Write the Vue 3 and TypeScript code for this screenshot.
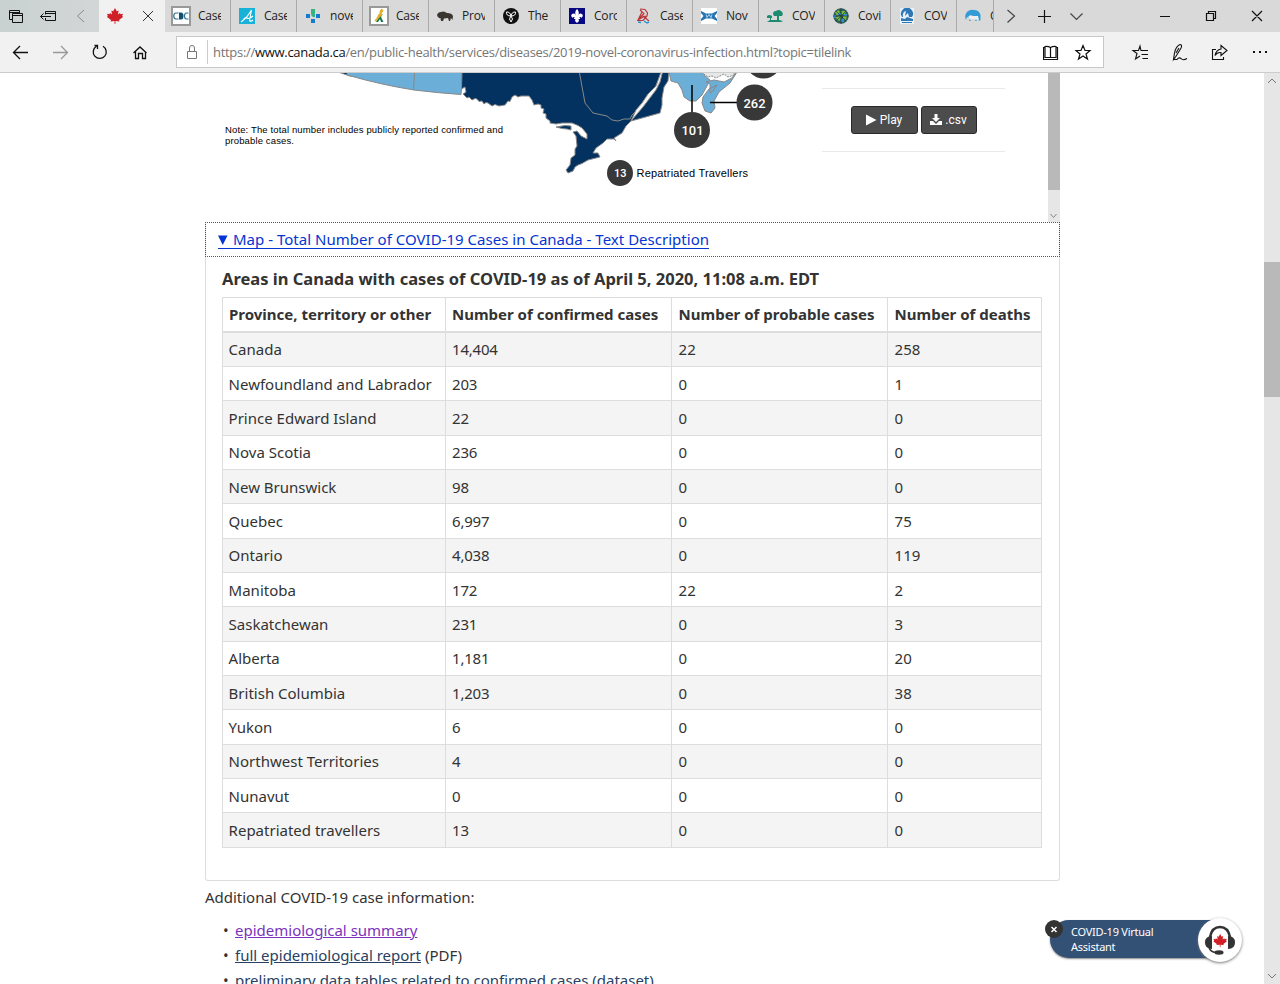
<script setup lang="ts">
interface Tab { icon: string; label: string }

const tabs: Tab[] = [
  { icon: 'cdc', label: 'Case' },
  { icon: 'alberta', label: 'Case' },
  { icon: 'cross', label: 'nove' },
  { icon: 'sask', label: 'Case' },
  { icon: 'bison', label: 'Prov' },
  { icon: 'ontario', label: 'The' },
  { icon: 'quebec', label: 'Coro' },
  { icon: 'nb', label: 'Case' },
  { icon: 'ns', label: 'Nov' },
  { icon: 'pei', label: 'COV' },
  { icon: 'globe', label: 'Covi' },
  { icon: 'yukon', label: 'COV' },
  { icon: 'bear', label: 'C' },
]

const headers: string[] = [
  'Province, territory or other',
  'Number of confirmed cases',
  'Number of probable cases',
  'Number of deaths',
]

const rows: string[][] = [
  ['Canada', '14,404', '22', '258'],
  ['Newfoundland and Labrador', '203', '0', '1'],
  ['Prince Edward Island', '22', '0', '0'],
  ['Nova Scotia', '236', '0', '0'],
  ['New Brunswick', '98', '0', '0'],
  ['Quebec', '6,997', '0', '75'],
  ['Ontario', '4,038', '0', '119'],
  ['Manitoba', '172', '22', '2'],
  ['Saskatchewan', '231', '0', '3'],
  ['Alberta', '1,181', '0', '20'],
  ['British Columbia', '1,203', '0', '38'],
  ['Yukon', '6', '0', '0'],
  ['Northwest Territories', '4', '0', '0'],
  ['Nunavut', '0', '0', '0'],
  ['Repatriated travellers', '13', '0', '0'],
]

const leaf = 'M8 0 L9.8 3.2 L11.6 2.4 L11 6.6 L13 5 L13.6 6.2 L16 5.8 L15.2 8 L16 9 L12 12 L12.4 13.4 L8.5 13 L8.4 16 H7.6 L7.5 13 L3.6 13.4 L4 12 L0 9 L.8 8 L0 5.8 L2.4 6.2 L3 5 L5 6.6 L4.4 2.4 L6.2 3.2 Z'
</script>

<template>
  <div class="window">
    <header class="tabbar">
      <div class="tab-tools">
        <svg width="98" height="32" viewBox="0 0 98 32" fill="none" stroke="#111">
          <path d="M9.500 19.500V10.500H19.500M9.500 12.500H19.500M12.500 19.500H9.500M12.500 22V13.500H22.500V22.500H12.500ZM12.500 15.500H22.500M19.500 10.500V13" />
          <path d="M45.500 14.500V11.500H55.500V20.500H45.500V18M45.500 13.500H55.500M40.500 16.500H51M43.500 13.500L40.500 16.500L43.500 19.500" />
          <path d="M84 10L77.500 16L84 22" stroke="#888" />
        </svg>
      </div>
      <div class="tab-active">
        <svg width="16" height="16" viewBox="0 0 16 16"><path :d="leaf" fill="#cf2027" /></svg>
        <svg width="12" height="12" viewBox="0 0 12 12" stroke="#333" fill="none"><path d="M1 1L11 11M11 1L1 11" /></svg>
      </div>
      <div v-for="t in tabs" :key="t.icon" class="tab" :class="'tab-' + t.icon">
        <svg v-if="t.icon === 'cdc'" class="fav wide" viewBox="0 0 20 20"><rect x="1" y="1" width="18" height="18" fill="#fff" stroke="#999" stroke-width="2" /><path d="M7.500 7H5Q2.800 7 2.800 10T5 13H7.500M17.500 7H15.500Q13.500 7 13.500 10T15.500 13H17.500" fill="none" stroke="#2b7390" stroke-width="1.200" /><path d="M8 6.500H10Q12.500 6.500 12.500 10T10 13.500H8Z" fill="#14506e" /></svg>
        <svg v-else-if="t.icon === 'alberta'" class="fav" viewBox="0 0 16 16"><rect width="16" height="16" fill="#18b2d8" /><path d="M2 14Q8 10 12.500 2L10.500 12.500Q12 14 14 12M4 12.500Q6 8.500 8 10T14 8" fill="none" stroke="#fff" stroke-width="1.100" /></svg>
        <svg v-else-if="t.icon === 'cross'" class="fav" viewBox="0 0 16 16"><path d="M6 1H10V9H8Q6 8 6 5Z" fill="#36b37e" /><path d="M1 6H5V10H1ZM11 6H15V10H11ZM6 11H10V15H6Z" fill="#147bd1" /></svg>
        <svg v-else-if="t.icon === 'sask'" class="fav wide" viewBox="0 0 20 20"><rect x="1" y="1" width="18" height="18" fill="#fff" stroke="#999" stroke-width="2" /><path d="M7 16L10 11L14 8L12 11L14.500 16H12L11 13L9 16Z" fill="#16734a" /><path d="M6 15L12 9M9 10.500L14 4M8 12L13 8M11 7L13 3" stroke="#e2ae24" stroke-width="1.700" /></svg>
        <svg v-else-if="t.icon === 'bison'" class="fav" viewBox="0 0 16 16"><path d="M0 7Q1 4 4 4Q7 2.500 10 5Q15 5 16 8L15.500 12L14 10L13 13H12L11 10L7 10.500L6 13H4L3.500 10Q1 11 0 7Z" fill="#39352f" /></svg>
        <svg v-else-if="t.icon === 'ontario'" class="fav" viewBox="0 0 16 16"><circle cx="8" cy="8" r="8" fill="#111" /><g fill="none" stroke="#fff"><path d="M8 8Q3 8 3.500 4Q7 3.500 8 8Q9 3.500 12.500 4Q13 8 8 8Q11 11 8 14Q5 11 8 8Z" /></g></svg>
        <svg v-else-if="t.icon === 'quebec'" class="fav" viewBox="0 0 16 16"><rect width="16" height="16" fill="#080880" /><path d="M8 1Q11 4 9 8Q10 4.500 13 6Q15 8 12 10Q12 8 10 10H11V11H9.500L10 13L8 15L6 13L6.500 11H5V10H6Q4 8 4 10Q1 8 3 6Q6 4.500 7 8Q5 4 8 1Z" fill="#fff" /></svg>
        <svg v-else-if="t.icon === 'nb'" class="fav" viewBox="0 0 16 16"><path d="M5 1L10 1.500L12.500 5L12 8L8.500 8.500L14 13M5 2L9 5.500L3 12L9 8.500M3 12L7 4M2 12.500H8L12 8" fill="none" stroke="#b8383b" stroke-width="1.200" /><path d="M3 14L6 14.500M9 13L12 15L14 14" fill="none" stroke="#2b93d1" stroke-width="1.500" /></svg>
        <svg v-else-if="t.icon === 'ns'" class="fav" viewBox="0 0 16 16"><rect width="16" height="16" fill="#fff" /><path d="M0 3L5 5.500H11L16 3V5L13.500 8L16 11V13L11 10.500H5L0 13V11L2.500 8L0 5Z" fill="#2374b5" /><path d="M5 6.500L6 9.500L8 6.500L10 9.500L11 6.500" fill="none" stroke="#dcecf8" stroke-width=".8" /></svg>
        <svg v-else-if="t.icon === 'pei'" class="fav" viewBox="0 0 16 16"><path d="M6 6Q6 3 9 3Q12 1 14 3Q17 5 15 8H12V12L16 13L14 14H0L3 12V10H0V8Q2 6 5 8V10H4V12H10V8H7Z" fill="#1d8b70" /></svg>
        <svg v-else-if="t.icon === 'globe'" class="fav" viewBox="0 0 16 16"><circle cx="8" cy="8" r="7.700" fill="#2f5d5b" /><path d="M2 4L6 2L7 5L4 8ZM8 3L13 3L12 6L9 7ZM3 9L8 8L7 13L4 12ZM10 8H14L13 12L10 11Z" fill="#74ba3a" /><path d="M5 5H8V7H5ZM11 6H14V8H11ZM8 11H11V14H8ZM1 7H3V10H1Z" fill="#2d93dd" /><path d="M3 3L13 13M13 3L3 13M8 0V16M0 8H16" stroke="#263b31" stroke-width=".7" /></svg>
        <svg v-else-if="t.icon === 'yukon'" class="fav" viewBox="0 0 16 16"><rect x="1" width="14" height="16" fill="#e9f1f8" /><path d="M3 9A6 6 0 1 1 13 9L10 9L9 5L6 8L7 3Q3 4 4 9ZM2 10L6 11L8 9L14 11V13H2ZM3 14H13V15H3Z" fill="#2f78b6" /></svg>
        <svg v-else class="fav" viewBox="0 0 16 16"><path d="M1 12Q-1 7 2 4Q5 1 9 2Q14 2 15.500 7V12L14 13L13 10H12V13H10V11H6V13H4L4 10L2 9Z" fill="#339bd5" /><path d="M3 9Q5 6 8 8L13 8L14 12L12 11L11 13L10 11H6L5 13L4 10Z" fill="#eee" /></svg>
        <span class="tab-label">{{ t.label }}</span>
      </div>
      <svg class="window-tools" width="286" height="32" viewBox="994 0 286 32" fill="none" stroke="#111">
        <path d="M1007.500 10L1014.500 16L1007.500 22.500M1070.500 13.500L1076.500 19.500L1082.500 13.500" stroke="#444" stroke-width="1.200" />
        <path d="M1038 16.500H1051M1044.500 10V23M1160 16.500H1170M1206.500 13.500H1213.500V20.500H1206.500ZM1208.500 13V11.500H1215.500V18.500H1214M1252 11L1262 21M1262 11L1252 21" stroke-width="1.200" />
      </svg>
    </header>

    <nav class="addressbar">
      <svg width="176" height="40" viewBox="0 32 176 40" fill="none" stroke="#111" stroke-width="1.300">
        <path d="M28 52.500H14M20 46L13.500 52.500L20 59" />
        <path d="M53 52.500H67M61 46L67.500 52.500L61 59" stroke="#999" />
        <path d="M96.500 46.300A6.500 6.500 0 1 0 103 46.300M94.500 45.500H97.500V49" />
        <path d="M133.500 53L140 47L146.500 53M135.500 51.500V58.500H138.500V53.500H142.500V58.500H145.500V51.500" />
      </svg>
      <div class="url-field">
        <svg width="31" height="30" viewBox="0 0 31 30" fill="none" stroke="#777"><path d="M10.500 14.500H19.500V21.500H10.500ZM12.500 14V11Q12.500 8.500 15 8.500T17.500 11V14" /><path d="M30.500 3V27" stroke="#ccc" /></svg>
        <span class="url">https://<b>www.canada.ca</b>/en/public-health/services/diseases/2019-novel-coronavirus-infection.html?topic=tilelink</span>
        <svg width="60" height="30" viewBox="1043 37 60 30" fill="none" stroke="#111">
          <path d="M1050.500 47.500Q1048 46 1045 46.500V57.500H1050.500ZM1050.500 47.500Q1053 46 1056 46.500V57.500H1050.500M1045 47.500H1043.500V59.500H1057.500V47.500H1056" stroke-width="1.200" />
          <path d="M1083 45.500L1085 50.500H1090L1086 54L1087.500 59L1083 56L1078.500 59L1080 54L1076 50.500H1081Z" stroke-width="1.200" />
        </svg>
      </div>
      <svg width="176" height="40" viewBox="1104 32 176 40" fill="none" stroke="#111" stroke-width="1.100">
        <path d="M1143 50.500H1141L1140 46L1138.500 50.500H1133L1137 53.500L1135.500 59L1140 56M1142 50.500H1148M1141.500 54.500H1148M1142.500 58.500H1148" />
        <path d="M1173.500 59.500L1174.500 53Q1176 46 1180 44.500Q1183 45 1180.500 49L1175.500 57ZM1176 53L1179 48M1173 59.500H1177Q1179 57 1181 58.500Q1183 61 1187 58.500" />
        <path d="M1216 49.500H1212.500V59.500H1223.500V57M1215 55.500Q1216 50 1221 49V45.500L1227 50.500L1221 55.500V52.500Q1217 52 1215 55.500Z" />
        <path d="M1253 52H1255M1259 52H1261M1265 52H1267" stroke-width="2" />
      </svg>
    </nav>

    <div class="viewport">
      <main class="content">
        <section class="map-frame">
          <svg class="map" width="843" height="149" viewBox="205 73 843 149">
            <g stroke="#888" stroke-width="1">
              <path d="M338 72L350 76H360V72Z" fill="#033260" />
              <path d="M347 72V75Q382 85 414 90Q439 93 461 94.500L463 72Z" fill="#6bafd8" />
              <path d="M414.500 73L413.500 90" fill="none" />
              <path d="M462 72L461.500 89L465 87L466 92L463 94L467 98L469 97L472 100L475 98.500L477 99L479 101.500L482 101L484 104L486 102.500L488 103L492 106L495 104.500L499 106L505 105L508 101L510 101.500L512 97L515 95L518 97L521 96L529 96L532 100L534 105L538 104L541 105L541 108L544 109L543 113L546 114L546 118L550 121L550 123L556 124L562 123L572 123L578 125.500L582 128L587 134L587 139L581 136L577 131L573 132L576 136L577 146L575 149L575 155L571 158L570 165L566 170L568 173L573 171L575 167L578 165L582 163.500L588 160L600 157L598 153L593 153L596 148L603 143L607 139L614 139L616 141L614 138L622 133L626 126L631 121L642 118L660 113L662 105L662 98L664 87L668 81L669 72Z" fill="#033260" />
              <path d="M556 127L565 125.500L571 126L571 130L567 129L562 128.500Z" fill="#033260" />
              <path d="M579.500 73L585 103L593 113L607 116L612 120L618 121L624 119L630 119L632 115L636 111L650 93L655 88L662 72" fill="none" />
              <path d="M661 72L656 86L648 94L642 103L636 110L631 121L643 107L656 90L660 82L662.500 72Z" fill="#f7f7f7" />
              <path d="M669 72L671 81L678 83L682 90L684 97L690 101L696 101L702 95L708 84L710 80L705 76L702 72Z" fill="#6bafd8" />
              <path d="M737 72L730 83L719 92L714 101L715 108L711 113L705 111L702 103L703 97L709 89L717 85L713 91L710 93L710 84L706 82L714 80L724 82L732 78L736 72Z" fill="#6bafd8" />
              <path d="M701 72L708 77L712 76L716 78L724 74L728 77L734 75V72" fill="#e6e8e8" stroke-dasharray="2 1" />
            </g>
            <path d="M692 85V112M710 102.500H737" stroke="#000" stroke-width="1.500" />
            <g fill="#383838"><circle cx="763.500" cy="60.500" r="18" /><circle cx="692" cy="130" r="18" /><circle cx="754.500" cy="102.500" r="18" /><circle cx="620" cy="173" r="13" /></g>
            <g class="map-count">
              <text x="681.500" y="135" font-size="13.500" textLength="22" lengthAdjust="spacingAndGlyphs">101</text>
              <text x="743.500" y="107.500" font-size="13.500" textLength="22" lengthAdjust="spacingAndGlyphs">262</text>
              <text x="614" y="177" font-size="11" textLength="12.500">13</text>
            </g>
            <g class="map-text">
              <text x="636.500" y="177" font-size="11" textLength="111.500">Repatriated Travellers</text>
              <text x="225" y="133" font-size="9.500" textLength="278">Note: The total number includes publicly reported confirmed and</text>
              <text x="225" y="144" font-size="9.500" textLength="69">probable cases.</text>
            </g>
          </svg>
          <div class="map-actions">
            <button class="map-btn play"><svg width="11" height="12" viewBox="0 0 11 12"><path d="M0 0.500L10.500 6L0 11.500Z" fill="#fff" /></svg>Play</button>
            <button class="map-btn csv"><svg width="12" height="12" viewBox="0 0 12 12"><path d="M4.500 0H7.500V4H10L6 8L2 4H4.500ZM0 7H3L6 10L9 7H12V11H0Z" fill="#fff" /></svg>.csv</button>
          </div>
          <div class="frame-scroll"><div class="frame-thumb" /><svg width="12" height="10" viewBox="0 0 12 10" fill="none" stroke="#888"><path d="M2.500 2L5.500 5.500L8.500 2" /></svg></div>
        </section>

        <section class="details">
          <div class="summary"><a class="summary-link"><svg class="marker" width="10" height="10" viewBox="0 0 10 10"><path d="M0 0.500H9.500L4.750 10Z" fill="#0535d2" /></svg>Map - Total Number of COVID-19 Cases in Canada - Text Description</a></div>
          <h2 class="caption">Areas in Canada with cases of COVID-19 as of April 5, 2020, 11:08 a.m. EDT</h2>
          <table class="cases">
            <colgroup><col class="c1" /><col class="c2" /><col class="c3" /><col class="c4" /></colgroup>
            <thead><tr><th v-for="h in headers" :key="h">{{ h }}</th></tr></thead>
            <tbody><tr v-for="r in rows" :key="r[0]"><td v-for="(c, i) in r" :key="i">{{ c }}</td></tr></tbody>
          </table>
        </section>

        <p class="more">Additional COVID-19 case information:</p>
        <ul class="links">
          <li><a class="visited">epidemiological summary</a></li>
          <li><a>full epidemiological report</a> (PDF)</li>
          <li><a>preliminary data tables related to confirmed cases (dataset)</a></li>
        </ul>
      </main>
      <div class="page-scroll">
        <svg width="16" height="16" viewBox="0 0 16 16" fill="none" stroke="#777"><path d="M4 10L8 6L12 10" /></svg>
        <div class="page-thumb" />
        <svg class="down" width="16" height="16" viewBox="0 0 16 16" fill="none" stroke="#777"><path d="M4 6L8 10L12 6" /></svg>
      </div>
    </div>

    <aside class="assistant">
      <div class="assistant-pill">COVID-19 Virtual<br />Assistant</div>
      <svg class="assistant-close" width="18" height="18" viewBox="0 0 18 18"><circle cx="9" cy="9" r="9" fill="#333" /><path d="M6.500 7L11.500 12M11.500 7L6.500 12" stroke="#fff" stroke-width="1.500" /></svg>
      <div class="assistant-face">
        <svg width="32" height="30" viewBox="0 0 32 30">
          <path d="M6 12Q8 2 16 2T26 12" fill="none" stroke="#333" stroke-width="2.500" />
          <path d="M8 11V24Q1 24 1 17.500T8 11ZM24 11V24Q31 24 31 17.500T24 11Z" fill="#333" />
          <path d="M5 22Q6 27 12 27.500" fill="none" stroke="#333" stroke-width="1.500" />
          <ellipse cx="15" cy="27.500" rx="4.500" ry="2.200" fill="#333" />
          <g transform="translate(9.500 9) scale(.83)"><path :d="leaf" fill="#cf2027" /></g>
        </svg>
      </div>
    </aside>
  </div>
</template>

<style>
html, body { margin: 0; overflow: hidden; }
</style>

<style scoped>
.window { position: relative; width: 1280px; height: 984px; overflow: hidden; background: #fff; display: flex; flex-direction: column; font-family: "Noto Sans", sans-serif; font-size: 15px; color: #333; }
.window svg { display: block; flex: none; }
.tabbar { display: flex; height: 32px; flex: none; background: linear-gradient(90deg, #c9d2d1 0, #d9d9d9 160px); }
.tab-tools { width: 99px; }
.tab-active { width: 66px; background: #f1f1f1; display: flex; align-items: center; justify-content: space-between; padding: 0 11px 0 8px; box-sizing: border-box; }
.tab { box-sizing: border-box; width: 66px; flex: none; border-right: 1px solid #aaa; display: flex; align-items: center; padding-left: 8px; overflow: hidden; font-family: "Open Sans", sans-serif; font-size: 12px; color: #222; }
.tab-bear { width: 37px; }
.fav { width: 16px; height: 16px; margin-right: 9px; }
.fav.wide { width: 20px; height: 20px; margin: 0 7px 0 -2px; }
.tab-label { width: 23px; flex: none; overflow: hidden; white-space: nowrap; letter-spacing: -.2px; margin-top: -1px; }
.tab-bear .tab-label { width: 3px; }
.window-tools { margin-left: auto; }
.addressbar { height: 40px; flex: none; background: #f1f1f1; border-bottom: 1px solid #ccc; display: flex; }
.url-field { box-sizing: border-box; width: 928px; height: 32px; margin-top: 4px; background: #fff; border: 1px solid #c8c8c8; display: flex; align-items: center; font-family: "Open Sans", sans-serif; font-size: 13px; color: #767676; }
.url { flex: 1; padding-left: 5px; white-space: nowrap; letter-spacing: -.3px; }
.url b { font-weight: 400; color: #111; }
.viewport { flex: 1; min-height: 0; display: flex; justify-content: space-between; overflow: hidden; }
.content { width: 855px; margin-left: 205px; flex: none; }
.map-frame { height: 149px; position: relative; display: flex; }
.map-text text { font-family: "Liberation Sans", Arial, sans-serif; fill: #000; }
.map-count text { font-family: Roboto, sans-serif; font-weight: 500; fill: #fff; }
.map-actions { position: absolute; left: 617px; top: 15px; width: 183px; height: 62px; border-top: 1px solid #e8e8e8; border-bottom: 1px solid #e8e8e8; display: flex; gap: 3px; justify-content: center; align-items: center; }
.map-btn { box-sizing: border-box; height: 28px; border: 1px solid #2a2a2a; border-radius: 3px; background: #4c4c4c; color: #fff; font-family: Roboto, sans-serif; font-size: 12px; padding: 0; display: flex; align-items: center; justify-content: center; gap: 3px; }
.play { width: 67px; }
.csv { width: 56px; }
.frame-scroll { width: 12px; background: #e6e6e6; display: flex; flex-direction: column; justify-content: space-between; }
.frame-thumb { height: 117px; background: #b9b9b9; }
.details { box-sizing: border-box; height: 659px; border: 1px solid #ddd; border-top: 0; border-radius: 3px; }
.summary { box-sizing: border-box; height: 35px; margin: 0 -1px; border: 1px dotted #555; display: flex; align-items: center; padding-left: 12px; color: #0535d2; }
.summary-link { display: flex; align-items: center; gap: 5px; height: 17px; margin-top: 1px; line-height: 17px; border-bottom: 1px solid #0535d2; white-space: nowrap; letter-spacing: .015px; }
.caption { margin: 9.500px 0 0 16px; font-size: 16.500px; line-height: 24px; font-weight: 700; white-space: nowrap; }
.cases { width: 820px; margin: 6px 0 0 16px; table-layout: fixed; border-collapse: collapse; }
.c1 { width: 223px; } .c2 { width: 226px; } .c3 { width: 216px; } .c4 { width: 154px; }
.cases th, .cases td { border: 1px solid #ddd; padding: 6.600px 6px 5.400px; line-height: 21.350px; text-align: left; white-space: nowrap; }
.cases th { border-bottom-width: 2px; font-weight: 700; }
.cases td:nth-child(1) { padding-left: 5.600px; }
.cases td:nth-child(2) { letter-spacing: -.2px; }
.cases th:nth-child(n+3), .cases td:nth-child(n+3) { padding-left: 6.600px; }
.cases tbody tr:nth-child(odd) { background: #f4f4f4; }
.more { margin: 5px 0 0; line-height: 22px; letter-spacing: -.02px; }
.links { margin: 11px 0 0; padding: 0 0 0 30px; list-style: none; }
.links li { line-height: 22px; margin-bottom: 3px; position: relative; white-space: nowrap; }
.links li::before { content: "•"; position: absolute; left: -12px; }
.links a { color: #284162; text-decoration: underline; }
.links a.visited { color: #7834bc; }
.page-scroll { width: 16px; background: #e6e6e6; display: flex; flex-direction: column; }
.page-thumb { height: 135px; margin-top: 173px; background: #b9b9b9; }
.down { margin-top: auto; }
.assistant { position: absolute; left: 1045px; top: 918px; width: 200px; height: 46px; }
.assistant-pill { box-sizing: border-box; margin: 2px 0 0 5px; width: 170px; height: 38px; padding: 4px 0 0 21px; border-radius: 19px 0 0 19px; background: #335075; color: #fff; font-size: 11px; line-height: 15px; letter-spacing: -.25px; box-shadow: 0 1px 2px #888; }
.assistant-close { position: absolute; left: 0; top: 2px; }
.assistant-face { position: absolute; left: 153px; top: 0; width: 44px; height: 44px; border-radius: 50%; background: #fff; box-shadow: 0 1px 3px #777; display: flex; align-items: center; justify-content: center; }
</style>
